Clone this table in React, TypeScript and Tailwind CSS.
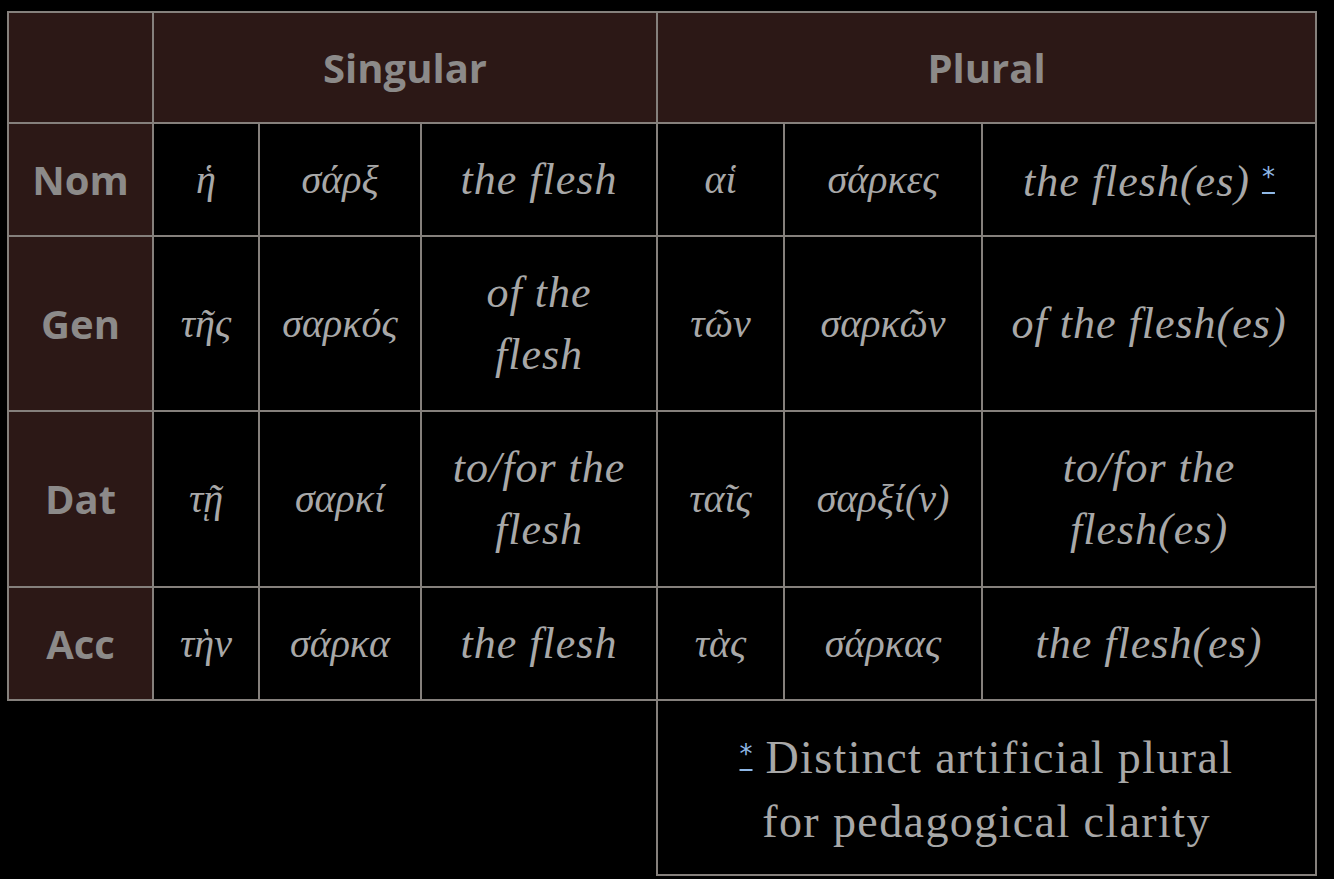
import React from 'react';

type Row = {
  label: string;
  cells: React.ReactNode[];
};

const Star = () => (
  <span className="text-[#8fb8e6] underline decoration-2 underline-offset-[6px] not-italic tracking-normal font-['DejaVu_Sans',sans-serif] text-[26px] align-[10px]">*</span>
);

const rows: Row[] = [
  {
    label: 'Nom',
    cells: [
      'ἡ',
      'σάρξ',
      'the flesh',
      'αἱ',
      'σάρκες',
      <>
        the flesh(es) <Star />
      </>,
    ],
  },
  {
    label: 'Gen',
    cells: [
      'τῆς',
      'σαρκός',
      <>
        of the
        <br />
        flesh
      </>,
      'τῶν',
      'σαρκῶν',
      'of the flesh(es)',
    ],
  },
  {
    label: 'Dat',
    cells: [
      'τῇ',
      'σαρκί',
      <>
        to/for the
        <br />
        flesh
      </>,
      'ταῖς',
      'σαρξί(ν)',
      <>
        to/for the
        <br />
        flesh(es)
      </>,
    ],
  },
  {
    label: 'Acc',
    cells: ['τὴν', 'σάρκα', 'the flesh', 'τὰς', 'σάρκας', 'the flesh(es)'],
  },
];

const rowHeights = ['h-[113px]', 'h-[175px]', 'h-[176px]', 'h-[113px]'];

// columns 2 and 5 hold the English glosses
const isGloss = (j: number) => j === 2 || j === 5;

export default function App() {
  return (
    <div className="min-h-[879px] w-full bg-black pl-[7px] pt-[11px]">
      <table className="table-fixed border-collapse w-[1310px] text-[#a8a8a8]">
        <colgroup>
          <col className="w-[145px]" />
          <col className="w-[106px]" />
          <col className="w-[162px]" />
          <col className="w-[236px]" />
          <col className="w-[127px]" />
          <col className="w-[198px]" />
          <col className="w-[334px]" />
        </colgroup>
        <thead>
          <tr className="h-[111px] bg-[#2c1816]">
            <th className="border-2 border-[#85807c]" />
            <th
              colSpan={3}
              className="border-2 border-[#85807c] font-['Open_Sans',sans-serif] text-[40px] font-bold text-[#8c8a89]"
            >
              Singular
            </th>
            <th
              colSpan={3}
              className="border-2 border-[#85807c] font-['Open_Sans',sans-serif] text-[40px] font-bold text-[#8c8a89]"
            >
              Plural
            </th>
          </tr>
        </thead>
        <tbody>
          {rows.map((row, i) => (
            <tr key={row.label} className={rowHeights[i]}>
              <th className="border-2 border-[#85807c] bg-[#2c1816] font-['Open_Sans',sans-serif] text-[40px] font-bold text-[#8c8a89]">
                {row.label}
              </th>
              {row.cells.map((cell, j) => (
                <td
                  key={j}
                  className={
                    isGloss(j)
                      ? "border-2 border-[#85807c] px-2 text-center align-middle font-['Liberation_Serif',serif] text-[44px] italic tracking-[1px] leading-[62px]"
                      : "border-2 border-[#85807c] px-2 text-center align-middle font-['Liberation_Serif',serif] text-[40px] italic leading-[62px]"
                  }
                >
                  {cell}
                </td>
              ))}
            </tr>
          ))}
          <tr className="h-[175px]">
            <td colSpan={4} className="border-none" />
            <td
              colSpan={3}
              className="border-2 border-[#85807c] text-center align-middle font-['Liberation_Serif',serif] text-[46px] tracking-[1.4px] leading-[64px]"
            >
              <Star /> Distinct artificial plural
              <br />
              for pedagogical clarity
            </td>
          </tr>
        </tbody>
      </table>
    </div>
  );
}
